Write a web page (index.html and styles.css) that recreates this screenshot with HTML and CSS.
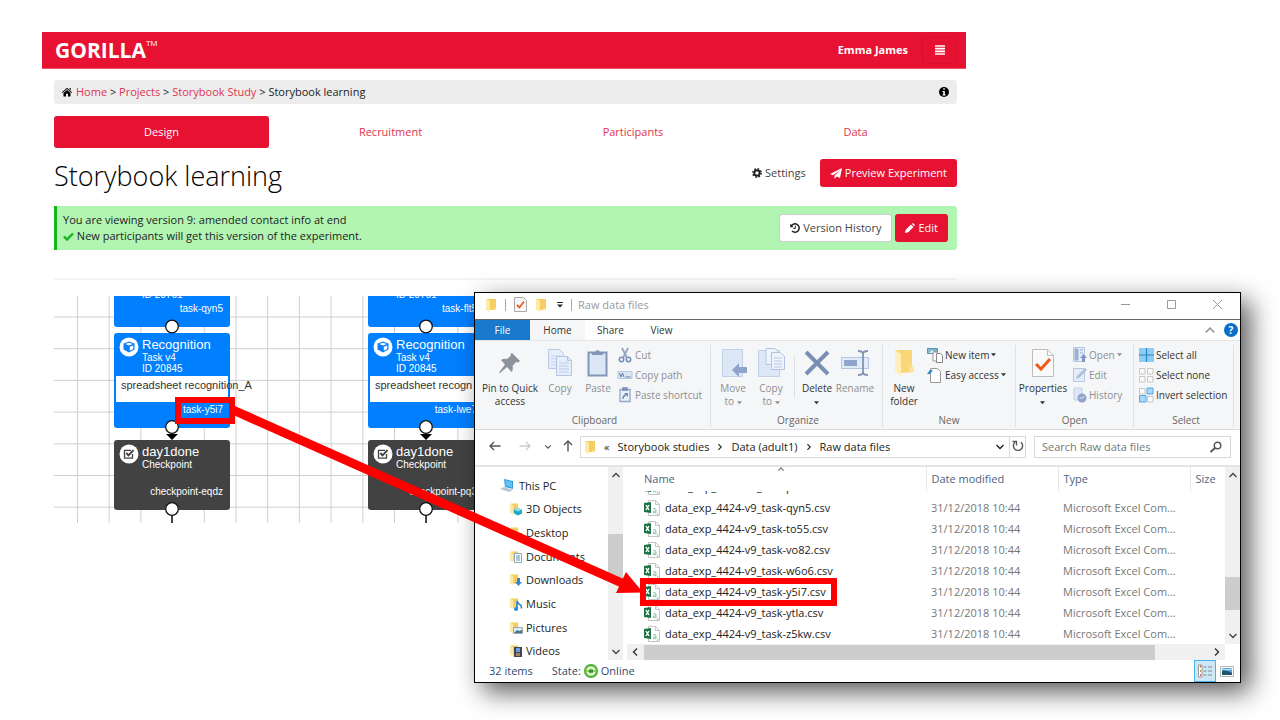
FILE: index.html
```html
<!DOCTYPE html>
<html lang="en">
<head>
<meta charset="utf-8">
<title>Storybook learning</title>
<link rel="stylesheet" href="styles.css">
</head>
<body>
<svg class="sprite" aria-hidden="true">
  <symbol id="folder" viewBox="0 0 12 14"><path d="M2 1h9v11H4z" fill="#f5cd63"/><path d="M1 1l4 2v11l-4-2z" fill="#ffe9a6"/><path d="M8 10h3v2H8z" fill="#fbe08c"/></symbol>
  <symbol id="csv" viewBox="0 0 16 16"><path d="M4.500.500h7l4 4v11h-11z" fill="#fff" stroke="#c4c4c4"/><path d="M11.500.500v4h4" fill="none" stroke="#c4c4c4"/><path d="M0 3l7-1v11l-7-1z" fill="#1d7345"/><path d="M2 5l3 5M5 5l-3 5" stroke="#fff" stroke-width="1.400"/><path d="M9 9q3-1.500 3 1v3M12 11q-3-.500-3 1t3 .500M14 13l-.500 2" fill="none" stroke="#8cc6a2"/></symbol>
  <symbol id="cube" viewBox="0 0 20 20"><circle cx="10" cy="10" r="9.500" fill="#fff"/><path d="M10 4.500l5.500 2v6L10 15.500l-5.500-3v-6z" fill="#0b7ffb"/><path d="M10 5.800l3.700 1.300-3.700 1.400-3.700-1.400zM10.800 9.800l3.400-1.300v3.400l-3.400 1.900z" fill="#fff"/></symbol>
  <symbol id="check" viewBox="0 0 20 20"><circle cx="10" cy="10" r="9.500" fill="#fff"/><path d="M13.500 10v4.200h-8V6.300h6.500" fill="none" stroke="#424242" stroke-width="1.300"/><path d="M7.300 9l2.200 2.400 5-5.300" fill="none" stroke="#424242" stroke-width="2"/></symbol>
  <symbol id="chev" viewBox="0 0 10 10"><path d="M1.500 3l3.500 3.500L8.500 3" fill="none" stroke="currentColor" stroke-width="1.400"/></symbol>
  <symbol id="arrow" viewBox="0 0 12 12"><path d="M11.500 6H1M5 2L1 6l4 4" fill="none" stroke="currentColor" stroke-width="1.400"/></symbol>
  <symbol id="tri" viewBox="0 0 6 4"><path d="M0 0h6L3 3.500z" fill="currentColor"/></symbol>
  <symbol id="pages" viewBox="0 0 26 30"><path d="M1.500 1.500h11l4 4v15h-15z" fill="#e6eefa" stroke="#b9c9e4"/><path d="M4 8h10M4 11h10M4 14h10M4 17h10" stroke="#c4d2ea"/><path d="M9.500 8.500h11l4 4v15h-15z" fill="#e6eefa" stroke="#b2c4e2"/><path d="M20.500 8.500v4h4" fill="none" stroke="#b2c4e2"/><path d="M12 15h10M12 18h10M12 21h10M12 24h10" stroke="#b9c9e6"/></symbol>
</svg>

<div class="page">
  <header class="bar">
    <a class="logo" href="#">GORILLA<sup>TM</sup></a>
    <a class="user" href="#">Emma James</a>
    <button class="burger" aria-label="Menu"><svg width="10" height="10" viewBox="0 0 10 10"><path d="M0 1h10M0 3.700h10M0 6.400h10M0 9h10" stroke="#fff" stroke-width="1.700"/></svg></button>
  </header>
  <main class="content">
    <nav class="crumbs">
      <svg width="10" height="10" viewBox="0 0 10 10"><path d="M5 .800L10 5.200l-.600.700L5 2.100.600 5.900 0 5.200zM7.500 1h1.200v2.200L7.500 2.200zM5 2.900l3.500 3V9.500H6V6.800H4v2.700H1.500V5.900z" fill="#000"/></svg>
      <span><a href="#">Home</a> &gt; <a href="#">Projects</a> &gt; <a href="#">Storybook Study</a> &gt; Storybook learning</span>
      <svg class="info" width="10" height="10" viewBox="0 0 10 10"><circle cx="5" cy="5" r="5" fill="#000"/><path d="M4.300 1.300h1.500v1.400H4.300zM3.500 3.900h2.300v3.400h.700v1.100h-3V7.300h.800V5h-.800z" fill="#fff"/></svg>
    </nav>
    <nav class="tabs">
      <a class="on" href="#">Design</a><a href="#">Recruitment</a><a href="#">Participants</a><a href="#">Data</a>
    </nav>
    <div class="heading">
      <h1>Storybook learning</h1>
      <button class="btn plain"><svg width="10" height="10" viewBox="0 0 10 10"><circle cx="5" cy="5" r="2.700" fill="none" stroke="#222" stroke-width="2"/><circle cx="5" cy="5" r="4.200" fill="none" stroke="#222" stroke-width="1.500" stroke-dasharray="1.650 1.650"/></svg>Settings</button>
      <button class="btn red"><svg width="12" height="11" viewBox="0 0 12 11"><path d="M12 0l-2 10-3.500-1.500L4.500 11V7.800L10 2 3.200 7.200 0 6z" fill="#fff"/></svg>Preview Experiment</button>
    </div>
    <section class="alert">
      <p>You are viewing version 9: amended contact info at end<br><svg width="11" height="9" viewBox="0 0 11 9"><path d="M1 4.500l3 3L10 1.500" fill="none" stroke="#16b516" stroke-width="2.400"/></svg> New participants will get this version of the experiment.</p>
      <button class="btn white"><svg width="10" height="10" viewBox="0 0 10 10"><path d="M1.300 3A4.200 4.200 0 1 1 2 8" fill="none" stroke="#222" stroke-width="1.500"/><path d="M.200.800v3.500h3.500z" fill="#222"/><path d="M5.300 2.700V5.500H3.500" fill="none" stroke="#222"/></svg>Version History</button>
      <button class="btn red"><svg width="10" height="10" viewBox="0 0 10 10"><path d="M0 10l.700-3.300L6 1.500 8.500 4 3.300 9.300zM6.700.800Q7.600-.300 8.600.600l.800.800q.900 1-.200 1.900z" fill="#fff"/></svg>Edit</button>
    </section>
    <hr>
    <section class="canvas">
      <svg class="grid" width="100%" height="100%">
        <defs><pattern id="cells" x="23" y="20.500" width="31.700" height="31.700" patternUnits="userSpaceOnUse"><path d="M.500 0v31.700M0 .500h31.700" stroke="#cfcfcf" fill="none"/></pattern></defs>
        <rect width="100%" height="100%" fill="url(#cells)"/>
      </svg>
      <div class="flow first">
        <div class="node task cut"><span class="sub">ID 20761</span><span class="tag">task-qyn5</span></div>
        <div class="node task"><svg class="badge"><use href="#cube"/></svg><strong>Recognition</strong><span class="sub">Task v4</span><span class="sub">ID 20845</span><span class="field">spreadsheet recognition_A</span><span class="tag">task-y5i7</span></div>
        <div class="node point"><svg class="badge"><use href="#check"/></svg><strong>day1done</strong><span class="sub">Checkpoint</span><span class="tag">checkpoint-eqdz</span></div>
        <svg class="ports" viewBox="0 0 20 227"><path d="M10 131v10M10 213v14" stroke="#111" stroke-width="1.500"/><path d="M4 138h12l-6 6z" fill="#000"/><g fill="#fff" stroke="#111" stroke-width="1.300"><circle cx="10" cy="30.500" r="6.300"/><circle cx="10" cy="131" r="6.300"/><circle cx="10" cy="213" r="6.300"/></g></svg>
      </div>
      <div class="flow second">
        <div class="node task cut"><span class="sub">ID 20761</span><span class="tag">task-flt5</span></div>
        <div class="node task"><svg class="badge"><use href="#cube"/></svg><strong>Recognition</strong><span class="sub">Task v4</span><span class="sub">ID 20845</span><span class="field">spreadsheet recogn</span><span class="tag">task-lwe7</span></div>
        <div class="node point"><svg class="badge"><use href="#check"/></svg><strong>day1done</strong><span class="sub">Checkpoint</span><span class="tag">checkpoint-pq3</span></div>
        <svg class="ports" viewBox="0 0 20 227"><path d="M10 131v10M10 213v14" stroke="#111" stroke-width="1.500"/><path d="M4 138h12l-6 6z" fill="#000"/><g fill="#fff" stroke="#111" stroke-width="1.300"><circle cx="10" cy="30.500" r="6.300"/><circle cx="10" cy="131" r="6.300"/><circle cx="10" cy="213" r="6.300"/></g></svg>
      </div>
    </section>
  </main>
</div>

<section class="window">
  <header class="titlebar">
    <svg width="12" height="14"><use href="#folder"/></svg><i class="rule"></i>
    <svg width="13" height="15" viewBox="0 0 13 15"><path d="M.500.500h9l3 3v11H.500z" fill="#f7f7f7" stroke="#aaa"/><path d="M3 8l2.500 2.500 4.500-6" fill="none" stroke="#e8601c" stroke-width="1.800"/></svg>
    <svg width="12" height="14"><use href="#folder"/></svg>
    <svg class="quick" width="6" height="6" viewBox="0 0 6 6"><path d="M0 .500h6" stroke="#222"/><path d="M0 2.500h6L3 5.500z" fill="#222"/></svg><i class="rule"></i>
    <span>Raw data files</span>
    <div class="winbtns">
      <button aria-label="Minimise"><svg width="11" height="11" viewBox="0 0 11 11"><path d="M1 5.500h9" stroke="#999"/></svg></button>
      <button aria-label="Maximise"><svg width="11" height="11" viewBox="0 0 11 11"><path d="M1.500 1.500h8v8h-8z" fill="none" stroke="#999"/></svg></button>
      <button aria-label="Close"><svg width="11" height="11" viewBox="0 0 11 11"><path d="M1 1l9 9M10 1l-9 9" stroke="#999"/></svg></button>
    </div>
  </header>
  <nav class="wtabs">
    <button class="file">File</button><button class="home">Home</button><button>Share</button><button>View</button>
    <svg class="collapse" width="12" height="12"><use href="#chev"/></svg>
    <button class="help" aria-label="Help">?</button>
  </nav>
  <div class="ribbon">
    <div class="group clip">
      <div class="tools">
        <button class="big"><svg width="26" height="30" viewBox="0 0 26 30"><path d="M15 5l8 8-2 1.500-2-.500-3.500 4q1 4-1 6L10 19 3 25l-1-.500L8 16.500 4 12q3-2 6-1l4-3.500-.500-1.500z" fill="#8c9299"/></svg><span>Pin to Quick<br>access</span></button>
        <button class="big off"><svg width="26" height="30"><use href="#pages"/></svg><span>Copy</span></button>
        <button class="big off"><svg width="22" height="30" viewBox="0 0 22 30"><path d="M1.500 4.500h18v23h-18z" fill="#dbe7f7" stroke="#8296b8" stroke-width="2"/><path d="M5 7V4h3q2.500-4 5 0h3v3z" fill="#8296b8"/></svg><span>Paste</span></button>
        <div class="stack off">
          <button><svg width="16" height="16" viewBox="0 0 16 16"><path d="M5 1l5 10M11 1L6 11" stroke="#95a6c4" stroke-width="1.800"/><circle cx="4.500" cy="12.500" r="2.200" fill="none" stroke="#758dba" stroke-width="1.500"/><circle cx="11.500" cy="12.500" r="2.200" fill="none" stroke="#758dba" stroke-width="1.500"/></svg>Cut</button>
          <button><svg width="16" height="16" viewBox="0 0 16 16"><path d="M1 4.500h14v7H1z" fill="#dce7f6" stroke="#b7c6de"/><path d="M2.500 6L4 10l1.500-4L7 10M8.500 10h5" fill="none" stroke="#607aa8"/></svg>Copy path</button>
          <button><svg width="16" height="16" viewBox="0 0 16 16"><path d="M3 2.500h10v12H3z" fill="#e8f0fb" stroke="#92a6c8" stroke-width="1.300"/><path d="M6 1h4v2H6zM6 12q0-3.500 3-4" fill="none" stroke="#6f87b3" stroke-width="1.400"/><path d="M7 6h4v4z" fill="#6f87b3"/></svg>Paste shortcut</button>
        </div>
      </div>
      <div class="label">Clipboard</div>
    </div>
    <div class="group org">
      <div class="tools">
        <button class="big off"><svg width="28" height="30" viewBox="0 0 28 30"><path d="M3.500 1.500h20v27h-20z" fill="#dce7f7" stroke="#c3d1e8"/><path d="M13 22l7-7v4h8v6h-8v4z" fill="#8ea4ca"/></svg><span>Move<br>to <svg width="5" height="4"><use href="#tri"/></svg></span></button>
        <button class="big off"><svg width="28" height="30" viewBox="0 0 28 30"><path d="M1.500 2.500h21v26h-21z" fill="#dce7f7" stroke="#c3d1e8"/><path d="M9 .500h9l3 3v13H9z" fill="#eef4fc" stroke="#b2c4e2"/><path d="M14.500 4.500h9l4 4v13h-13z" fill="#eef4fc" stroke="#b2c4e2"/><path d="M17 10h8M17 13h8M17 16h8M17 19h8" stroke="#b9c9e6"/></svg><span>Copy<br>to <svg width="5" height="4"><use href="#tri"/></svg></span></button>
        <i class="divider"></i>
        <button class="big"><svg width="26" height="30" viewBox="0 0 26 30"><path d="M2 4l22 22M24 4L2 26" stroke="#7a8fb4" stroke-width="4"/></svg><span>Delete<br><svg width="5" height="4"><use href="#tri"/></svg></span></button>
        <button class="big off"><svg width="28" height="30" viewBox="0 0 28 30"><path d="M.500 9.500h27v11H.500z" fill="#e2ecf9" stroke="#b4c5e0"/><path d="M3 12h13v6H3z" fill="#8fa5cc"/><path d="M22 4v22M17 3q5 0 5 3 0-3 5-3M17 27q5 0 5-3 0 3 5 3" fill="none" stroke="#8194b5" stroke-width="1.800"/></svg><span>Rename</span></button>
      </div>
      <div class="label">Organize</div>
    </div>
    <div class="group new">
      <div class="tools">
        <button class="big"><svg width="22" height="30" viewBox="0 0 22 30"><path d="M2 2h17v15l2 7-14 1z" fill="#f9d777"/><path d="M2 2l6 4v22l-6-5z" fill="#ffeeb8"/><path d="M17 16l4 8-5 .500z" fill="#fbe598"/></svg><span>New<br>folder</span></button>
        <div class="stack">
          <button><svg width="16" height="16" viewBox="0 0 16 16"><path d="M.500 1.500h10v5H.500z" fill="#7eb6cf" stroke="#5d92ad"/><path d="M2 6l3-3 3 3z" fill="#e6f4d8"/><path d="M6 5h4l2 2v7H6z" fill="#fff" stroke="#999"/><path d="M9.500 6.500h4l2 2v7h-6z" fill="#fff" stroke="#888"/></svg>New item <svg width="5" height="4"><use href="#tri"/></svg></button>
          <button><svg width="16" height="16" viewBox="0 0 16 16"><path d="M3.500 1.500h7l3 3v11h-10z" fill="#fff" stroke="#999"/><path d="M0 7l3-4h3L3 7z" fill="#3186c7"/></svg>Easy access <svg width="5" height="4"><use href="#tri"/></svg></button>
        </div>
      </div>
      <div class="label">New</div>
    </div>
    <div class="group open">
      <div class="tools">
        <button class="big"><svg width="22" height="30" viewBox="0 0 22 30"><path d="M.500 1.500h15l6 6v21H.500z" fill="#fafafa" stroke="#bdbdbd"/><path d="M15.500 1.500v6h6" fill="none" stroke="#bdbdbd"/><path d="M4 16l5 5 9-10" fill="none" stroke="#f05a1a" stroke-width="3"/></svg><span>Properties<br><svg width="5" height="4"><use href="#tri"/></svg></span></button>
        <div class="stack off">
          <button><svg width="14" height="16" viewBox="0 0 14 16"><path d="M.500.500h11v14H.500z" fill="#e4edf9" stroke="#b7c6df"/><path d="M2 2h3v11H2zM7 3h3M7 6h3" fill="#9db0d1" stroke="#9db0d1"/><path d="M10.500 7l3.500 4h-2v4H9v-4H7z" fill="#7f96c1"/></svg>Open <svg width="5" height="4"><use href="#tri"/></svg></button>
          <button><svg width="14" height="16" viewBox="0 0 14 16"><path d="M.500 1.500h11v13H.500z" fill="#e4edf9" stroke="#b7c6df"/><path d="M3 12l1-3 8-8 2 2-8 8z" fill="#aebfda"/></svg>Edit</button>
          <button><svg width="14" height="16" viewBox="0 0 14 16"><path d="M1 1h8v12H1z" fill="#dce7f7" stroke="#c5d2e8"/><circle cx="9" cy="11" r="4.500" fill="#8ea4ca"/><path d="M6.500 11h3l2-2" fill="none" stroke="#e8effa"/></svg>History</button>
        </div>
      </div>
      <div class="label">Open</div>
    </div>
    <div class="group sel">
      <div class="tools">
        <div class="stack">
          <button><svg width="15" height="16" viewBox="0 0 15 16"><path d="M0 1h15v14H0z" fill="#8dccf5"/><path d="M7.500 1v14M0 8h15" stroke="#2e86c1" stroke-width="1.200"/></svg>Select all</button>
          <button><svg width="15" height="16" viewBox="0 0 15 16"><path d="M.500 1.500h5.500v5.500H.500zM8.500 1.500H14V7H8.500zM.500 9.500H6V15H.500zM8.500 9.500H14V15H8.500z" fill="#fafafa" stroke="#c6c6c6"/></svg>Select none</button>
          <button><svg width="15" height="16" viewBox="0 0 15 16"><path d="M.500 1.500H6V7H.500zM8.500 9.500H14V15H8.500z" fill="#fafafa" stroke="#c6c6c6"/><path d="M8 1h6v6H8zM.500 8.500h6.500v6.500H.500z" fill="#a5d8fa" stroke="#55a9e0"/></svg>Invert selection</button>
        </div>
      </div>
      <div class="label">Select</div>
    </div>
    <i class="edge"></i>
  </div>
  <div class="address">
    <button aria-label="Back"><svg width="12" height="12"><use href="#arrow"/></svg></button>
    <button class="dim" aria-label="Forward"><svg class="right" width="12" height="12"><use href="#arrow"/></svg></button>
    <button class="narrow" aria-label="Recent"><svg width="8" height="8"><use href="#chev"/></svg></button>
    <button class="narrow" aria-label="Up"><svg class="up" width="12" height="12"><use href="#arrow"/></svg></button>
    <div class="path">
      <svg width="12" height="14"><use href="#folder"/></svg><span class="more">«</span>
      <span>Storybook studies</span><svg class="sep" width="8" height="8"><use href="#chev"/></svg>
      <span>Data (adult1)</span><svg class="sep" width="8" height="8"><use href="#chev"/></svg>
      <span>Raw data files</span>
      <svg class="drop" width="10" height="10"><use href="#chev"/></svg>
      <button class="reload" aria-label="Refresh"><svg width="12" height="12" viewBox="0 0 12 12"><path d="M3 2.300A4.600 4.600 0 1 0 9 2.300" fill="none" stroke="#555" stroke-width="1.400"/><path d="M.500 1.500h4v4" fill="none" stroke="#555" stroke-width="1.300"/></svg></button>
    </div>
    <label class="search"><input type="text" placeholder="Search Raw data files" aria-label="Search Raw data files"><svg width="12" height="12" viewBox="0 0 12 12"><circle cx="7.500" cy="4.500" r="3.300" fill="none" stroke="#555" stroke-width="1.400"/><path d="M5 7l-4.500 4" stroke="#555" stroke-width="1.700"/></svg></label>
  </div>
  <div class="body">
    <nav class="tree">
      <a class="root" href="#"><svg width="16" height="14" viewBox="0 0 16 14"><path d="M4 0l9 2v8L5 8z" fill="#2f9bdc"/><path d="M5 1.300l7 1.500v6L6 7z" fill="#62c0f3"/><path d="M0 10l4-2 9 3-4 2z" fill="#b9c7d1"/></svg>This PC</a>
      <a href="#"><svg width="14" height="14" viewBox="0 0 14 14"><use href="#folder" width="10" height="13"/><path d="M9 6l4 1.500v4L9 13.500l-4-2v-4z" fill="#24a7c5"/><path d="M9 6l4 1.500L9 9.500 5 7.500z" fill="#8fe2f0"/></svg>3D Objects</a>
      <a href="#"><svg width="14" height="14" viewBox="0 0 14 14"><use href="#folder" width="10" height="13"/><path d="M5 7h8v5H5z" fill="#1683d8"/></svg>Desktop</a>
      <a href="#"><svg width="14" height="14" viewBox="0 0 14 14"><use href="#folder" width="10" height="13"/><path d="M5.500 3.500h7v9h-7z" fill="#fff" stroke="#8ba6bd"/><path d="M7 6h4M7 8h4M7 10h4" stroke="#5b8db7"/></svg>Documents</a>
      <a href="#"><svg width="14" height="14" viewBox="0 0 14 14"><use href="#folder" width="10" height="13"/><path d="M8 5h3v4h2l-3.500 4L6 9h2z" fill="#2f86d6"/></svg>Downloads</a>
      <a href="#"><svg width="14" height="14" viewBox="0 0 14 14"><use href="#folder" width="10" height="13"/><path d="M8 12V4q1 3 4 4.500 1 1.500 0 3" fill="none" stroke="#2089e0" stroke-width="1.600"/><circle cx="7" cy="12" r="2" fill="#2089e0"/></svg>Music</a>
      <a href="#"><svg width="14" height="14" viewBox="0 0 14 14"><use href="#folder" width="10" height="13"/><path d="M4.500 6.500h9v6h-9z" fill="#d9eefa" stroke="#9aa"/><path d="M5 12l3-3 2 1 3-1v3z" fill="#45758c"/></svg>Pictures</a>
      <a href="#"><svg width="14" height="14" viewBox="0 0 14 14"><use href="#folder" width="10" height="13"/><path d="M5 3h8v10H5z" fill="#3e4658"/><path d="M7 4h4v4H7z" fill="#6f9bd8"/><path d="M7 9h4v3H7z" fill="#a4826a"/></svg>Videos</a>
    </nav>
    <div class="vscroll treebar"><svg class="flip" width="10" height="10"><use href="#chev"/></svg><i></i><svg width="10" height="10"><use href="#chev"/></svg></div>
    <div class="listing">
      <table>
        <thead><tr><th class="cname">Name<svg class="sort" width="8" height="8"><use href="#chev"/></svg></th><th class="cdate">Date modified</th><th class="ctype">Type</th><th>Size</th></tr></thead>
        <tbody>
          <tr class="partial"><td><div><span class="cell"><svg width="16" height="16"><use href="#csv"/></svg>data_exp_4424-v9_task-pk3c.csv</span></div></td><td><div><span class="cell">31/12/2018 10:44</span></div></td><td></td><td></td></tr>
          <tr><td><span class="cell"><svg width="16" height="16"><use href="#csv"/></svg>data_exp_4424-v9_task-qyn5.csv</span></td><td>31/12/2018 10:44</td><td>Microsoft Excel Com...</td><td></td></tr>
          <tr><td><span class="cell"><svg width="16" height="16"><use href="#csv"/></svg>data_exp_4424-v9_task-to55.csv</span></td><td>31/12/2018 10:44</td><td>Microsoft Excel Com...</td><td></td></tr>
          <tr><td><span class="cell"><svg width="16" height="16"><use href="#csv"/></svg>data_exp_4424-v9_task-vo82.csv</span></td><td>31/12/2018 10:44</td><td>Microsoft Excel Com...</td><td></td></tr>
          <tr><td><span class="cell"><svg width="16" height="16"><use href="#csv"/></svg>data_exp_4424-v9_task-w6o6.csv</span></td><td>31/12/2018 10:44</td><td>Microsoft Excel Com...</td><td></td></tr>
          <tr><td><span class="cell"><svg width="16" height="16"><use href="#csv"/></svg>data_exp_4424-v9_task-y5i7.csv</span></td><td>31/12/2018 10:44</td><td>Microsoft Excel Com...</td><td></td></tr>
          <tr><td><span class="cell"><svg width="16" height="16"><use href="#csv"/></svg>data_exp_4424-v9_task-ytla.csv</span></td><td>31/12/2018 10:44</td><td>Microsoft Excel Com...</td><td></td></tr>
          <tr><td><span class="cell"><svg width="16" height="16"><use href="#csv"/></svg>data_exp_4424-v9_task-z5kw.csv</span></td><td>31/12/2018 10:44</td><td>Microsoft Excel Com...</td><td></td></tr>
        </tbody>
      </table>
      <div class="hscroll"><svg class="left" width="10" height="10"><use href="#chev"/></svg><i></i><svg class="right" width="10" height="10"><use href="#chev"/></svg></div>
    </div>
    <div class="vscroll listbar"><svg class="flip" width="10" height="10"><use href="#chev"/></svg><i></i><svg width="10" height="10"><use href="#chev"/></svg></div>
  </div>
  <footer class="status">
    <span>32 items</span>
    <span class="state">State: <svg width="14" height="14" viewBox="0 0 14 14"><circle cx="7" cy="7" r="7" fill="#3faa35"/><circle cx="7" cy="7" r="5.600" fill="#8ed15a"/><path d="M3.500 6a3.700 3.700 0 0 1 7 0M10.500 8a3.700 3.700 0 0 1-7 0" fill="none" stroke="#fff" stroke-width="1.300"/><path d="M5 6h4v2.500H5z" fill="#2f8f35"/></svg> Online</span>
    <button class="view on" aria-label="Details"><svg width="14" height="14" viewBox="0 0 14 14"><path d="M.500 1h3.500v12H.500z" fill="#fff" stroke="#999"/><path d="M2 2.500h1M2 11h1" stroke="#c33" stroke-width="1.500"/><path d="M2 7h1" stroke="#967a2e" stroke-width="1.500"/><path d="M5.500 3h3M10 3h4M5.500 7h3M10 7h4M5.500 11h3M10 11h4" stroke="#7d8b93"/></svg></button>
    <button class="view" aria-label="Thumbnails"><svg width="14" height="11" viewBox="0 0 14 11"><path d="M.500.500h13v10H.500z" fill="#fff" stroke="#b5b5b5"/><path d="M2 2h10v7H2z" fill="#5ba4e0"/><path d="M2 5q4-2 10 2v2H2z" fill="#23566c"/><path d="M2 3l5 1 5-1" stroke="#cfe8fa" fill="none"/></svg></button>
  </footer>
</section>

<svg class="marks" width="1280" height="720" viewBox="0 0 1280 720" aria-hidden="true">
  <path d="M233 410L623 583.500" stroke="#f00" stroke-width="9"/>
  <path d="M643 592.500L626 572l-10 21z" fill="#f00"/>
  <rect x="178" y="400" width="54" height="21" fill="none" stroke="#f00" stroke-width="6"/>
  <rect x="643" y="581" width="191" height="22" fill="none" stroke="#f00" stroke-width="6"/>
</svg>
</body>
</html>
```
FILE: styles.css
```css
* { box-sizing: border-box; }
body {
  margin: 0;
  position: relative;
  min-height: 720px;
  background: #fff;
  color: #222;
  font: 11px/16px "Open Sans", "Noto Sans", sans-serif;
}
button { font: inherit; color: inherit; background: none; border: 0; padding: 0; }
a { color: inherit; text-decoration: none; }
svg { flex: none; }
.sprite { position: absolute; width: 0; height: 0; }

/* Experiment page */
.page { padding: 32px 314px 0 42px; }
.bar {
  display: flex;
  align-items: center;
  height: 37px;
  padding: 0 9px 0 13px;
  background: #e71132;
  border-bottom: 1px solid #f0506a;
  color: #fff;
}
.logo { flex: 1; font-size: 21px; line-height: 30px; font-weight: 700; }
.logo sup { font-size: 8px; font-weight: 400; line-height: 8px; vertical-align: 12px; }
.user { font-weight: 700; margin-right: 14px; }
.burger {
  display: grid;
  place-items: center;
  width: 35px;
  height: 27px;
  border: 1px solid #d90f2e;
  border-radius: 3px;
}
.content { padding: 11px 9px 0 12px; }
.crumbs {
  display: flex;
  align-items: center;
  gap: 4px;
  height: 24px;
  padding: 0 8px;
  background: #ededed;
  border-radius: 3px;
}
.crumbs a { color: #e0344e; }
.info { margin-left: auto; }
.tabs { display: grid; grid-template-columns: 215fr 243fr 242fr 203fr; margin-top: 12px; }
.tabs a { padding: 8px 0; text-align: center; color: #e0344e; border-radius: 3px; }
.tabs .on { background: #e71132; color: #fff; }
.heading { display: flex; align-items: center; height: 50px; margin-bottom: 8px; }
h1 { flex: 1; margin: 6px 0 0; font-size: 27px; line-height: 36px; font-weight: 300; color: #000; }
.btn {
  display: flex;
  align-items: center;
  gap: 3px;
  height: 28px;
  padding: 0 10px;
  border-radius: 3px;
  white-space: nowrap;
}
.plain { color: #444; padding: 0 14px; }
.red { background: #e71132; color: #fff; }
.white { background: #fff; border: 1px solid #ccc; margin-right: 3px; color: #444; }
.alert {
  display: flex;
  align-items: center;
  height: 44px;
  padding: 0 9px 0 6px;
  background: #b2f5b2;
  border-left: 3px solid #16b516;
  border-radius: 0 3px 3px 0;
}
.alert p { flex: 1; margin: 0; }
.alert p svg { vertical-align: -1px; }
hr { height: 2px; margin: 28px 0 16px; border: 0; background: #f5f5f5; }

/* Diagram nodes sit freely on the grid */
.canvas { position: relative; height: 227px; overflow: hidden; }
.grid { display: block; }
.flow {
  position: absolute;
  top: 0;
  width: 116px;
  height: 227px;
  font-family: "Liberation Sans", Arial, sans-serif;
  color: #fff;
}
.first { left: 60px; }
.second { left: 314px; }
.node {
  position: absolute;
  left: 0;
  width: 116px;
  top: 37px;
  height: 95px;
  padding: 4px 7px 0 28px;
  border-radius: 3px;
}
.task { background: #007fff; }
.node.cut { top: -64px; padding-top: 57px; }
.point { background: #424242; top: 144px; height: 70px; }
.node strong, .node .sub { display: block; font-weight: 400; }
.node strong { font-size: 13px; line-height: 15px; }
.sub { font-size: 10px; line-height: 11px; }
.badge { position: absolute; left: 5px; top: 4px; width: 20px; height: 20px; }
.field {
  position: absolute;
  left: 2px;
  right: 2px;
  top: 43px;
  height: 26px;
  padding: 3px 5px;
  background: #fff;
  color: #333;
  font-size: 11px;
  line-height: 13px;
  white-space: nowrap;
}
.tag { position: absolute; right: 7px; bottom: 12px; font-size: 10px; line-height: 12px; }
.ports { position: absolute; left: 48px; top: 0; width: 20px; height: 227px; }

/* Explorer window floats over the page */
.window {
  position: absolute;
  left: 474px;
  right: 39px;
  top: 292px;
  background: #fff;
  border: 1px solid #000;
  box-shadow: 9px 9px 24px rgba(0, 0, 0, .65);
}
.titlebar {
  display: flex;
  align-items: center;
  gap: 8px;
  height: 27px;
  padding: 0 17px 3px 10px;
  border-bottom: 1px solid #666;
  color: #999;
}
.rule { width: 1px; height: 12px; background: #aaa; }
.titlebar .quick { margin-left: 2px; }
.titlebar span { margin-left: -2px; }
.winbtns { display: flex; gap: 35px; margin-left: auto; }
.winbtns svg { display: block; }
.wtabs { display: flex; align-items: center; height: 20px; font-size: 10px; color: #333; }
.wtabs button { width: 51px; height: 20px; }
.wtabs .file { width: 55px; background: #1979ca; color: #fff; }
.wtabs .home { width: 55px; background: #f5f6f7; }
.collapse { margin-left: auto; color: #999; transform: rotate(180deg); }
.wtabs .help {
  width: 14px;
  height: 14px;
  margin: 0 2px 0 8px;
  border-radius: 50%;
  background: #0a6fc9;
  color: #fff;
  font-weight: 700;
  line-height: 14px;
}
.ribbon {
  display: grid;
  grid-template-columns: 236fr 172fr 133fr 118fr 100fr 6px;
  height: 90px;
  padding: 4px 0 2px;
  background: #f5f6f7;
  border-top: 1px solid #e4e5e6;
  border-bottom: 1px solid #dcdddf;
  font-size: 10px;
  line-height: 13px;
  color: #333;
}
.group { display: flex; flex-direction: column; justify-content: space-between; border-right: 1px solid #e0e1e3; }
.clip { padding-left: 4px; }
.org { padding-left: 3px; }
.sel { padding-left: 5px; }
.tools { display: flex; align-items: flex-start; }
.label { text-align: center; color: #666; }
.big { display: flex; flex-direction: column; align-items: center; gap: 4px; width: 38px; padding-top: 3px; white-space: nowrap; }
.clip .big:first-child { width: 62px; }
.new .big { width: 42px; margin-right: 2px; }
.open .big { width: 54px; margin-right: 3px; }
.off { color: #8d8f92; }
.divider { width: 1px; height: 43px; margin: 10px 3px 0 4px; background: #dfe0e2; }
.stack button { display: flex; align-items: center; gap: 2px; height: 20px; white-space: nowrap; }
.address { display: flex; align-items: center; height: 37px; padding: 0 9px 2px 5px; border-bottom: 2px solid #e4e4e4; color: #555; }
.address > button { width: 30px; line-height: 12px; }
.address > .narrow { width: 16px; margin-right: 4px; }
.address > .dim { color: #ccc; }
.left { transform: rotate(90deg); }
.address .right { transform: rotate(180deg); }
.up { transform: rotate(90deg); }
.path { display: flex; align-items: center; flex: 1; height: 22px; border: 1px solid #d9d9d9; color: #222; padding-left: 3px; }
.path .more { margin: 0 8px; }
.sep { margin: 0 7px; transform: rotate(-90deg); }
.drop { margin: 0 4px 0 auto; }
.reload { width: 16px; height: 20px; border-left: 1px solid #d9d9d9; line-height: 12px; }
.search { display: flex; align-items: center; flex: 0 0 197px; height: 22px; margin-left: 8px; padding: 0 8px 0 7px; border: 1px solid #d9d9d9; }
.search input { flex: 1; min-width: 0; border: 0; padding: 0; font: inherit; background: none; outline: 0; }
.search input::placeholder { color: #777; opacity: 1; }
.body { display: flex; }
.tree { display: flex; flex-direction: column; width: 133px; padding-top: 7px; margin-bottom: -3px; }
.tree a { display: flex; align-items: center; gap: 3px; flex: 1; padding-left: 34px; }
.tree .root { padding-left: 25px; }
.vscroll { display: flex; flex-direction: column; align-items: center; width: 15px; padding: 3px 0; background: #f0f0f0; color: #444; }
.vscroll i { width: 15px; background: #cdcdcd; }
.flip { transform: rotate(180deg); }
.treebar i { height: 47px; margin: 54px 0 auto; }
.listbar { height: 177px; }
.listbar i { height: 33px; margin: 97px 0 auto; }
.listing { flex: 1; padding-left: 4px; }
table { width: 100%; border-collapse: collapse; table-layout: fixed; color: #777; }
th { position: relative; height: 24px; padding: 0 5px; border-right: 1px solid #e5e5e5; text-align: left; font-weight: 400; color: #4c6484; }
th:last-child { border: 0; }
.cname { width: 299px; padding-left: 17px; }
.cdate, .ctype { width: 132px; }
.sort { position: absolute; left: 150px; top: -2px; transform: rotate(180deg); color: #777; }
td { height: 21px; padding: 0 5px; white-space: nowrap; }
td:first-child { padding-left: 17px; color: #222; }
.cell { display: flex; align-items: center; gap: 5px; height: 21px; }
.partial td { height: 6px; }
.partial div { display: flex; align-items: flex-end; height: 6px; overflow: hidden; }
.hscroll { display: flex; align-items: center; height: 16px; padding: 0 3px; background: #f0f0f0; color: #333; }
.hscroll i { flex: none; width: 511px; height: 15px; margin: 0 auto 0 4px; background: #cdcdcd; }
.hscroll .right { transform: rotate(-90deg); }
.status { display: flex; align-items: center; gap: 19px; height: 22px; padding: 0 6px 0 14px; color: #2f4a6d; }
.state { display: flex; align-items: center; gap: 3px; }
.view { display: grid; place-items: center; width: 14px; height: 22px; }
.view.on { width: 22px; margin: 0 -15px 0 auto; background: #cce8f6; border: 1px solid #4db3e6; }

.marks { position: absolute; left: 0; top: 0; pointer-events: none; }
```
